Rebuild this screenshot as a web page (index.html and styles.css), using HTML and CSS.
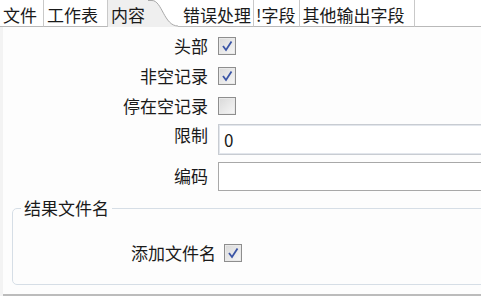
FILE: index.html
```html
<!DOCTYPE html>
<html lang="zh-CN">
<head>
  <meta charset="UTF-8">
  <title>内容</title>
  <link rel="stylesheet" href="styles.css">
</head>
<body>
  <div class="tabs">
    <div class="tab tab-first">文件</div>
    <div class="tab tab-wide">工作表</div>
    <div class="tab tab-active">
      <span>内容</span>
      <svg class="tab-curve" width="30" height="27" viewBox="0 0 30 27">
        <path d="M0 0 H4 C14 0 16 26 30 26 V27 H0 Z" fill="#efefef"/>
        <path d="M0 0.5 H4 C14 0.5 16 26 30 26" fill="none" stroke="#a9a9a9" stroke-width="1"/>
      </svg>
    </div>
    <div class="tab tab-after-active">错误处理</div>
    <div class="tab tab-narrow">!字段</div>
    <div class="tab tab-wide">其他输出字段</div>
    <div class="tab-rest"></div>
  </div>

  <div class="panel">
    <div class="form">
      <label class="lbl">头部</label>
      <div class="ctl"><span class="cb checked"><svg viewBox="0 0 12 12" width="12" height="12"><path d="M2 6 L5 10 L10.5 1.5" fill="none" stroke="#3b55a6" stroke-width="1.8"/></svg></span></div>

      <label class="lbl">非空记录</label>
      <div class="ctl"><span class="cb checked"><svg viewBox="0 0 12 12" width="12" height="12"><path d="M2 6 L5 10 L10.5 1.5" fill="none" stroke="#3b55a6" stroke-width="1.8"/></svg></span></div>

      <label class="lbl">停在空记录</label>
      <div class="ctl"><span class="cb"></span></div>

      <label class="lbl lbl-top">限制</label>
      <div class="ctl ctl-top"><div class="input input-tall">0</div></div>

      <label class="lbl">编码</label>
      <div class="ctl"><div class="input"></div></div>
    </div>

    <fieldset class="group">
      <legend>结果文件名</legend>
      <div class="group-row">
        <label class="lbl">添加文件名</label>
        <span class="cb checked"><svg viewBox="0 0 12 12" width="12" height="12"><path d="M2 6 L5 10 L10.5 1.5" fill="none" stroke="#3b55a6" stroke-width="1.8"/></svg></span>
      </div>
    </fieldset>
  </div>
</body>
</html>
```

FILE: styles.css
```css
body {
  margin: 0;
  width: 481px;
  height: 296px;
  overflow: hidden;
  background: #f3f3f3;
  font-family: "Noto Sans CJK SC", "Liberation Sans", sans-serif;
  font-size: 17px;
  color: #1a1a1a;
}

.tabs {
  display: flex;
  height: 27px;
  background: #ffffff;
}

.tab {
  display: flex;
  align-items: center;
  padding: 2px 6px 0 3px;
  border-right: 1px solid #c9c9c9;
  border-bottom: 1px solid #b9b9b9;
  background: #ffffff;
  white-space: nowrap;
  line-height: 1;
}

.tab-first {
  padding: 2px 6px 0 3px;
}

.tab-wide {
  padding: 2px 9px 0 3px;
}

.tab-narrow {
  padding: 2px 3px 0 2px;
}

.tab-active {
  background: #efefef;
  border-bottom: none;
  border-right: none;
  padding: 2px 0 0 3px;
  align-items: stretch;
}

.tab-active span {
  display: flex;
  align-items: center;
  padding-right: 3px;
}

.tab-curve {
  display: block;
  background: #ffffff;
  margin-top: -2px;
}

.tab-after-active {
  padding-left: 5px;
  padding-right: 2px;
}

.tab-rest {
  flex: 1;
  border-bottom: 1px solid #b9b9b9;
}

.panel {
  height: 269px;
  margin-left: 3px;
  background: #fdfdfd;
  border-bottom: 2px solid #bcbcbc;
  padding-top: 4px;
  box-sizing: border-box;
}

.form {
  display: grid;
  grid-template-columns: 205px 320px;
  column-gap: 10px;
}

.lbl {
  text-align: right;
  line-height: 30px;
  height: 30px;
}

.ctl {
  display: flex;
  align-items: center;
  height: 30px;
}

.lbl-top {
  height: 37px;
  line-height: 28px;
}

.ctl-top {
  height: 37px;
  align-items: flex-start;
  padding-top: 3px;
}

.cb {
  display: inline-flex;
  align-items: center;
  justify-content: center;
  width: 16px;
  height: 16px;
  border: 1px solid #8e8e8e;
  background: linear-gradient(135deg, #d9d9d9, #f7f7f7);
  box-shadow: inset 0 0 0 1px #e9e9e9;
}

.input {
  box-sizing: border-box;
  width: 320px;
  height: 29px;
  border: 1px solid #a8a8a8;
  background: #ffffff;
  padding: 4px 5px;
  line-height: 20px;
}

.input-tall {
  height: 31px;
  border-color: #c8ccd2;
  box-shadow: inset 0 0 0 1px #e2e6ec;
  padding-top: 5px;
}

.group {
  margin: 8px 0 0 9px;
  width: 520px;
  height: 86px;
  box-sizing: border-box;
  border: 1px solid #d6dee6;
  border-radius: 5px;
  padding: 0;
}

.group legend {
  margin-left: 8px;
  padding: 0 3px;
  line-height: 18px;
}

.group-row {
  display: flex;
  align-items: center;
  gap: 8px;
  padding: 26px 0 0 118px;
}

.group-row .lbl {
  line-height: 20px;
  height: 20px;
}
```
